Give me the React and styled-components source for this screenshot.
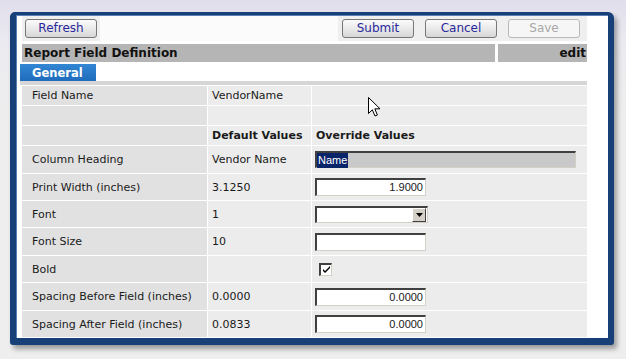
import styled, { createGlobalStyle } from 'styled-components';

const rows = [
  { label: 'Column Heading', def: 'Vendor Name', kind: 'heading', h: 27 },
  { label: 'Print Width (inches)', def: '3.1250', kind: 'number', value: '1.9000', h: 26 },
  { label: 'Font', def: '1', kind: 'select', h: 26 },
  { label: 'Font Size', def: '10', kind: 'text', value: '', h: 27 },
  { label: 'Bold', def: '', kind: 'check', h: 26 },
  { label: 'Spacing Before Field (inches)', def: '0.0000', kind: 'number', value: '0.0000', h: 27 },
  { label: 'Spacing After Field (inches)', def: '0.0833', kind: 'number', value: '0.0000', h: 26 },
];

function Override({ row }) {
  if (row.kind === 'heading') {
    return (
      <WideInput>
        <Selected>Name</Selected>
      </WideInput>
    );
  }
  if (row.kind === 'select') {
    return (
      <Select>
        <SelectButton>
          <svg width="7" height="4" viewBox="0 0 7 4">
            <path d="M0 0h7L3.5 4z" fill="#000" />
          </svg>
        </SelectButton>
      </Select>
    );
  }
  if (row.kind === 'check') {
    return (
      <CheckBox>
        <svg width="9" height="9" viewBox="0 0 9 9">
          <path d="M1 4l2 2 5-5v2L3 8 1 6z" fill="#000" />
        </svg>
      </CheckBox>
    );
  }
  return <Input>{row.value}</Input>;
}

export default function App() {
  return (
    <Page>
      <GlobalStyle />
      <Window>
        <Toolbar>
          <ButtonCell>
            <Button>Refresh</Button>
          </ButtonCell>
          <ToolbarGap />
          <ButtonCell $right>
            <Button>Submit</Button>
            <Button>Cancel</Button>
            <Button disabled>Save</Button>
          </ButtonCell>
        </Toolbar>

        <SectionHeader>
          <HeaderTitle>Report Field Definition</HeaderTitle>
          <HeaderAction>edit</HeaderAction>
        </SectionHeader>

        <TabStrip>
          <Tab>General</Tab>
        </TabStrip>

        <Grid $rows={['19px', '19px', '19px', ...rows.map(r => `${r.h}px`)]}>
          <LabelCell>Field Name</LabelCell>
          <ValueCell>VendorName</ValueCell>
          <ValueCell />

          <LabelCell />
          <ValueCell />
          <ValueCell />

          <LabelCell />
          <ValueCell $bold>Default Values</ValueCell>
          <ValueCell $bold>Override Values</ValueCell>

          {rows.map(row => (
            <Row key={row.label}>
              <LabelCell>{row.label}</LabelCell>
              <ValueCell>{row.def}</ValueCell>
              <ValueCell $field>
                <Override row={row} />
              </ValueCell>
            </Row>
          ))}
        </Grid>

        <Cursor width="13" height="20" viewBox="0 0 13 20">
          <path
            d="M0.5 0.5V16.5L4.3 12.8L7 19L9.4 18L6.8 11.8H12Z"
            fill="#fff"
            stroke="#000"
            strokeLinejoin="round"
          />
        </Cursor>
      </Window>
    </Page>
  );
}

const GlobalStyle = createGlobalStyle`
  html, body {
    margin: 0;
    height: 100%;
  }

  body {
    background: linear-gradient(#e0deec, #ebeaf0 40px, #eeeeee 120px);
    font-family: "DejaVu Sans", Verdana, sans-serif;
    color: #1a1a1a;
  }
`;

const Page = styled.div`
  padding: 12px 0 0 10px;
`;

const Window = styled.div`
  position: relative;
  box-sizing: border-box;
  width: 604px;
  padding: 1px 21px 1px 6px;
  background: #fff;
  border-style: solid;
  border-color: #173f78;
  border-width: 3px 6px 7px 6px;
  border-radius: 5px 6px 3px 3px;
  box-shadow: 3px 4px 5px rgba(0, 0, 0, 0.35), inset 1px 1px 0 #5a7fb0;
`;

const Toolbar = styled.div`
  display: flex;
  height: 25px;
`;

const ButtonCell = styled.div`
  display: flex;
  align-items: center;
  gap: 11px;
  padding: ${p => (p.$right ? '0 7px 0 4px' : '0 3px')};
  background: #efefef;
`;

const ToolbarGap = styled.div`
  flex: 1;
  background: #fbfbfb;
`;

const Button = styled.button`
  box-sizing: border-box;
  width: 72px;
  height: 19px;
  padding: 0;
  font-family: "DejaVu Sans", Verdana, sans-serif;
  font-size: 12px;
  line-height: 15px;
  color: #2a2a9c;
  background: linear-gradient(#fbfbfb, #e6e6e6 60%, #d6d6d6);
  border: 1px solid #777;
  border-radius: 3px;

  &:disabled {
    color: #a8a8a8;
    background: #f6f6f6;
    border-color: #b8b8b8;
  }
`;

const SectionHeader = styled.div`
  display: flex;
  gap: 3px;
  height: 18px;
  margin-top: 3px;
  font-size: 12px;
  font-weight: bold;
  line-height: 18px;
  color: #111;
`;

const HeaderTitle = styled.div`
  flex: 1;
  padding-left: 2px;
  background: #b5b5b5;
`;

const HeaderAction = styled.div`
  width: 88px;
  padding-right: 1px;
  text-align: right;
  background: #b5b5b5;
`;

const TabStrip = styled.div`
  display: flex;
  margin: 2px 0 0 -2px;
  padding-left: 0;
  border-bottom: 4px solid #d6d6d6;
`;

const Tab = styled.div`
  width: 76px;
  height: 17px;
  padding-left: 12px;
  box-sizing: border-box;
  font-size: 11.5px;
  font-weight: bold;
  line-height: 18px;
  color: #fff;
  background: linear-gradient(#3286d2, #1f6cbd);
`;

const Grid = styled.div`
  display: grid;
  grid-template-columns: 185px 103px 1fr;
  grid-template-rows: ${p => p.$rows.join(' ')};
  gap: 1px;
  padding-top: 1px;
  background: #fff;
  font-size: 11px;
`;

const Row = styled.div`
  display: contents;
`;

const LabelCell = styled.div`
  display: flex;
  align-items: center;
  padding-left: 10px;
  background: #e1e1e1;
  white-space: nowrap;
`;

const ValueCell = styled.div`
  display: flex;
  align-items: center;
  padding-left: ${p => (p.$field ? '3px' : '4px')};
  background: #ececec;
  font-weight: ${p => (p.$bold ? 'bold' : 'normal')};
  white-space: nowrap;
`;

const Input = styled.div`
  box-sizing: border-box;
  width: 111px;
  height: 18px;
  padding: 0 2px;
  font-family: "Liberation Sans", Arial, sans-serif;
  font-size: 11px;
  line-height: 15px;
  text-align: right;
  background: #fff;
  border-style: solid;
  border-width: 2px 1px 1px 2px;
  border-color: #404040 #d4d0c8 #d4d0c8 #404040;
`;

const WideInput = styled(Input)`
  width: 261px;
  height: 17px;
  padding: 0;
  text-align: left;
  background: #c9c9c9;
`;

const Selected = styled.span`
  display: inline-block;
  padding: 0 1px;
  color: #fff;
  background: #0a246a;
`;

const Select = styled(Input)`
  display: flex;
  justify-content: flex-end;
  align-items: center;
  width: 113px;
  height: 17px;
  padding: 0 1px 0 0;
`;

const SelectButton = styled.div`
  display: flex;
  align-items: center;
  justify-content: center;
  width: 12px;
  height: 12px;
  background: #d4d0c8;
  border: 1px solid;
  border-color: #fff #404040 #404040 #fff;
`;

const CheckBox = styled.div`
  display: flex;
  align-items: center;
  justify-content: center;
  box-sizing: border-box;
  width: 13px;
  height: 13px;
  margin-left: 4px;
  background: #fff;
  border-style: solid;
  border-width: 2px 1px 1px 2px;
  border-color: #404040 #d4d0c8 #d4d0c8 #404040;
`;

const Cursor = styled.svg`
  position: absolute;
  left: 352px;
  top: 82px;
`;
